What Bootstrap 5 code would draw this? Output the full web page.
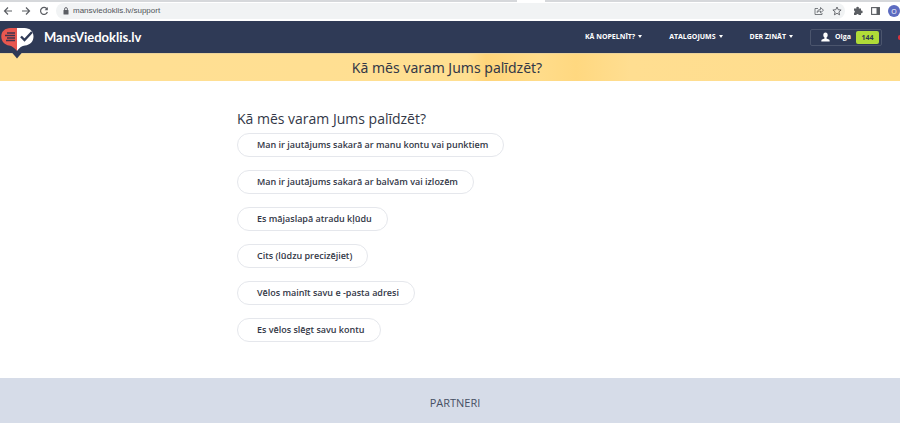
<!DOCTYPE html>
<html lang="lv">
<head>
<meta charset="utf-8">
<meta name="viewport" content="width=device-width, initial-scale=1">
<title>MansViedoklis.lv</title>
<link href="https://cdn.jsdelivr.net/npm/bootstrap@5.3.0/dist/css/bootstrap.min.css" rel="stylesheet">
<style>
body{font-family:"Open Sans","Noto Sans",sans-serif;color:#333847;background:#fff;overflow-x:hidden}
svg{display:block;flex:none}
.browser-strip{height:2px;background:#d6d8db;padding-left:57.4%}
.browser-strip span{display:block;width:28px;height:2px;background:#fff}
.browser-bar{height:19px;padding:0 0 1px 3px;color:#5b5e63}
.icon-btn{border:0;background:none;padding:0;color:inherit;line-height:1}
.omnibox{height:16px;border-radius:8px;background:#f1f3f4;margin-left:7px;padding:0 3px 0 7px}
.omnibox input{border:0;background:none;outline:0;padding:0;font:8px/14px "Liberation Sans",sans-serif;color:#505358;min-width:0}
.profile{width:12px;height:12px;border-radius:50%;background:#5c6bc0;color:#fff;font-size:7px}
.site-nav{height:32px;background:#2f3a56;padding:0 0 0 1px}
.brand-logo{margin-bottom:-12px;position:relative;z-index:1}
.brand-link{height:32px}
.brand-name{font:700 13px/20px Lato,"Open Sans",sans-serif;color:#fff;margin-left:10px}
.menu-btn{border:0;background:none;padding:0;color:#fff;font-size:7px;line-height:16px;font-weight:700}
.menu-btn::after{margin-left:3px;border-top-width:3px;border-left-width:2px;border-right-width:2px;vertical-align:1px}
.menus{gap:27px;margin-right:17px}
.user-box{height:17px;width:72px;border:1px solid #4b556d;border-radius:2px;background:none;color:#fff;font-size:7px;font-weight:700;padding:0 2px 0 10px}
.points{width:23px;height:13px;line-height:13px;border-radius:2px;background:#b0dc38;color:#2f3a56}
.alert-edge{width:18px;padding-left:16px}
.alert-edge span{display:block;width:3px;height:5px;border-radius:2px 0 0 2px;background:#d8323c}
.banner{height:28px;background:linear-gradient(90deg,#ffdf94 0,#ffdf91 52%,#ffd57a 54%,#ffdc8a 60%,#ffd880 64%,#ffde91 70%,#ffdd8c 100%);padding-right:6px;border-top:1px solid #ead29a}
.banner h1{font-family:"Noto Sans","Open Sans",sans-serif;font-size:14px;line-height:27px;font-weight:400}
.support{padding:28px 16px 36px 26.33%}
.support h2{font-size:14px;line-height:20px;font-weight:400;margin-bottom:4px}
.topics{gap:13px}
.topic{height:24px;border:1px solid #e5e7ec;border-radius:12px;background:#fff;color:#333847;font-size:9px;line-height:22px;font-weight:600;padding:0 15px 0 19px}
.partners{height:45px;background:#d6dce8;padding:5px 0 0 10px;font-size:11px;color:#465064}
</style>
</head>
<body>
<div class="browser-strip"><span></span></div>
<div class="browser-bar d-flex align-items-center">
  <button class="icon-btn" aria-label="Atpakaļ"><svg width="10" height="10" viewBox="0 0 10 10" fill="none" stroke="currentColor" stroke-width="1.2"><path d="M9 5H1.5M5 1.5 1.5 5 5 8.500"/></svg></button>
  <button class="icon-btn ms-2" aria-label="Uz priekšu"><svg width="10" height="10" viewBox="0 0 10 10" fill="none" stroke="currentColor" stroke-width="1.2"><path d="M1 5h7.500M5 1.500 8.500 5 5 8.500"/></svg></button>
  <button class="icon-btn ms-2" aria-label="Pārlādēt"><svg width="10" height="10" viewBox="0 0 10 10" fill="none" stroke="currentColor" stroke-width="1.200"><path d="M8 3A3.500 3.500 0 1 0 8.400 6"/><path d="M8.800 1v3.200H5.600z" fill="currentColor" stroke="none"/></svg></button>
  <div class="omnibox d-flex align-items-center flex-grow-1">
    <svg width="6" height="8" viewBox="0 0 6 8"><rect x=".5" y="3" width="5" height="4.500" rx=".5" fill="#5b5e63"/><path d="M1.600 3V2a1.400 1.400 0 0 1 2.800 0v1" fill="none" stroke="#5b5e63" stroke-width=".9"/></svg>
    <input class="flex-grow-1 ms-1" type="text" aria-label="Adrese" value="mansviedoklis.lv/support">
    <button class="icon-btn" aria-label="Kopīgot"><svg width="10" height="10" viewBox="0 0 10 10" fill="none" stroke="currentColor" stroke-width=".8"><path d="M4 2.500H1v6h7V7M3 6.500c.3-2 1.500-3 3.500-3V1.500l3 2.700-3 2.600V5C5 5 4 5.500 3 6.500z"/></svg></button>
    <button class="icon-btn ms-2" aria-label="Pievienot grāmatzīmi"><svg width="10" height="10" viewBox="0 0 10 10" fill="none" stroke="currentColor" stroke-width=".9"><path d="m5 1 1.200 2.700 2.900.3-2.200 1.900.7 2.900L5 7.300 2.400 8.800l.7-2.900L.9 4l2.900-.3z"/></svg></button>
  </div>
  <button class="icon-btn ms-2" aria-label="Paplašinājumi"><svg width="10" height="10" viewBox="0 0 10 10" fill="currentColor"><path d="M1 2.500h2.400a1.300 1.300 0 1 1 2.400 0H8v2.200a1.300 1.300 0 1 1 0 2.500V9H5.800a1.300 1.300 0 0 0-2.500 0H1V6.800a1.200 1.200 0 0 0 0-2.300z"/></svg></button>
  <button class="icon-btn ms-2" aria-label="Sānu panelis"><svg width="9" height="8" viewBox="0 0 9 8"><rect x=".6" y=".6" width="7.800" height="6.800" fill="none" stroke="currentColor" stroke-width="1.100"/><path d="M5.500.5h3v7h-3z" fill="currentColor"/></svg></button>
  <button class="icon-btn profile ms-2" aria-label="Profils">O</button>
</div>

<nav class="site-nav d-flex align-items-center">
  <a href="#" class="brand-link d-flex align-items-center text-decoration-none">
    <svg class="brand-logo" width="33" height="32" viewBox="0 0 33 32">
      <path d="M8 22h16l-8 9.500z" fill="#2f3a56"/>
      <path d="M16 1H9.500C4 1 .3 4.500.3 9.500S4 18 8 18.500c3 .5 5 2 8 5.500z" fill="#e8574f"/>
      <path d="M16 1h7.500c5.500 0 9 3.500 9 8.500s-3.500 8.500-8.500 9c-3 .3-5.500 2-8 5.500z" fill="#fff"/>
      <path d="M6 6h8M4 8.500h10M6 11h8M5 13.500h9" stroke="#3e344c" stroke-width="1.300"/>
      <path d="m20 9.500 3.500 3.500L31 5" fill="none" stroke="#2f3a56" stroke-width="2.400"/>
    </svg>
    <span class="brand-name">MansViedoklis.lv</span>
  </a>
  <div class="menus d-flex ms-auto">
    <button class="menu-btn dropdown-toggle">KĀ NOPELNĪT?</button>
    <button class="menu-btn dropdown-toggle">ATALGOJUMS</button>
    <button class="menu-btn dropdown-toggle">DER ZINĀT</button>
  </div>
  <button class="user-box d-flex align-items-center justify-content-between">
    <svg width="9" height="10" viewBox="0 0 9 10" fill="#fff"><path d="M4.500.5C6 .5 6.700 1.500 6.700 3S6 5 5.500 5.600v.9L8 7.600c.5.300.7.800.7 1.900H.3c0-1.100.2-1.600.7-1.900l2.500-1.100v-.9C3 5 2.300 4.500 2.300 3S3 .5 4.500.5z"/></svg>
    <span>Olga</span><span class="points">144</span>
  </button>
  <div class="alert-edge overflow-hidden"><span></span></div>
</nav>

<header class="banner text-center"><h1 class="m-0">Kā mēs varam Jums palīdzēt?</h1></header>

<main class="support">
  <h2>Kā mēs varam Jums palīdzēt?</h2>
  <div class="topics d-flex flex-column align-items-start">
    <button class="topic">Man ir jautājums sakarā ar manu kontu vai punktiem</button>
    <button class="topic">Man ir jautājums sakarā ar balvām vai izlozēm</button>
    <button class="topic">Es mājaslapā atradu kļūdu</button>
    <button class="topic">Cits (lūdzu precizējiet)</button>
    <button class="topic">Vēlos mainīt savu e -pasta adresi</button>
    <button class="topic">Es vēlos slēgt savu kontu</button>
  </div>
</main>

<footer class="partners d-flex align-items-center justify-content-center">PARTNERI</footer>
<script src="https://cdn.jsdelivr.net/npm/bootstrap@5.3.0/dist/js/bootstrap.bundle.min.js"></script>
</body>
</html>
